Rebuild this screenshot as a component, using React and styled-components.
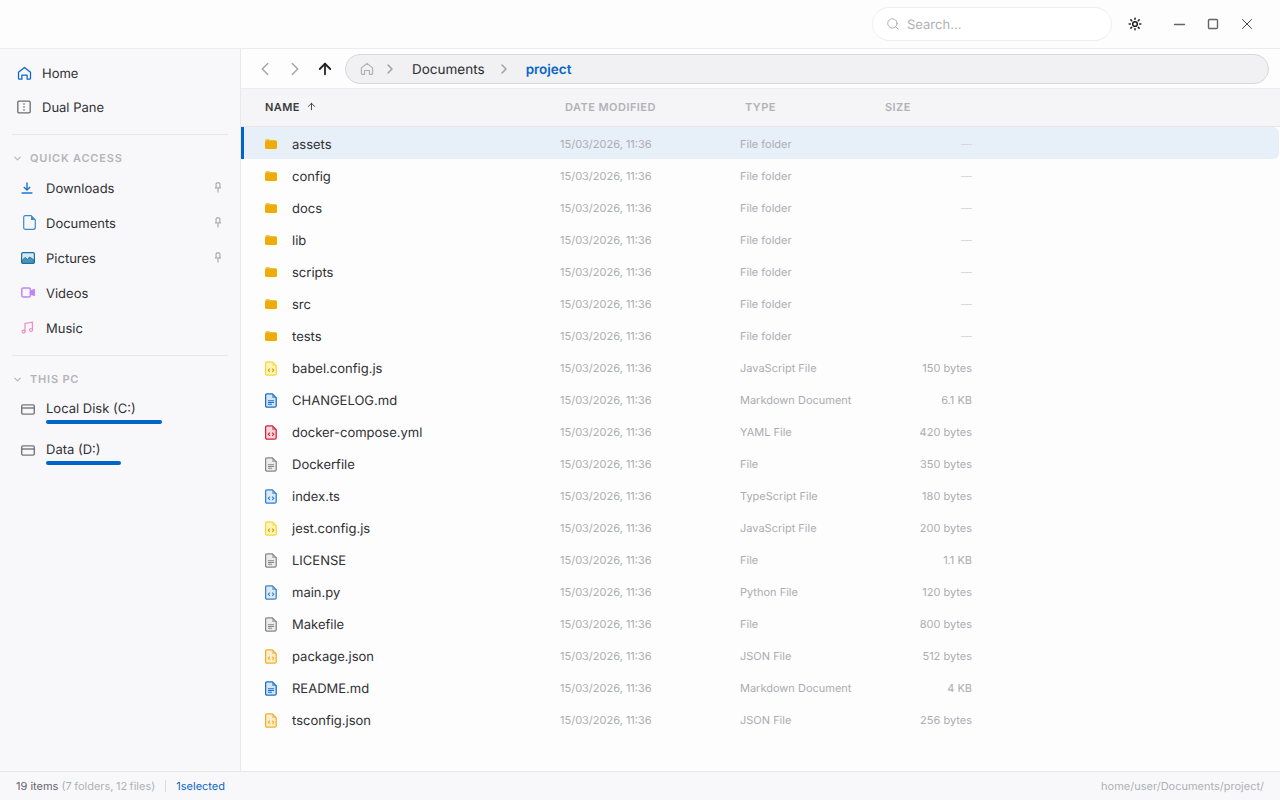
import React from "react";
import styled, { createGlobalStyle } from "styled-components";
import { ChevronDown, ChevronLeft, ChevronRight, ArrowUp, Search, Minus, Square, X, Sun } from "lucide-react";

const GlobalStyle = createGlobalStyle`
  html, body { margin: 0; padding: 0; height: 100%; background: #fdfdfe; }
  * { box-sizing: border-box; }
  body {
    font-family: Inter, "Noto Sans", sans-serif;
    color: #26262a;
    overflow: hidden;
    text-rendering: geometricPrecision;
  }
`;

const FOLDERS = ["assets", "config", "docs", "lib", "scripts", "src", "tests"];

const FILES = [
  ["babel.config.js", "JavaScript File", "150 bytes", "#f8d93a", "#fff4b5", "code"],
  ["CHANGELOG.md", "Markdown Document", "6.1 KB", "#1a6fc4", "#d2e4f6", "text"],
  ["docker-compose.yml", "YAML File", "420 bytes", "#d3213a", "#f8d5da", "code"],
  ["Dockerfile", "File", "350 bytes", "#86868a", "#ececee", "text"],
  ["index.ts", "TypeScript File", "180 bytes", "#2f7fd0", "#dbe9f8", "code"],
  ["jest.config.js", "JavaScript File", "200 bytes", "#f8d93a", "#fff4b5", "code"],
  ["LICENSE", "File", "1.1 KB", "#86868a", "#ececee", "text"],
  ["main.py", "Python File", "120 bytes", "#3a84c0", "#dbe9f5", "code"],
  ["Makefile", "File", "800 bytes", "#86868a", "#ececee", "text"],
  ["package.json", "JSON File", "512 bytes", "#f3ae2c", "#fdeecb", "code"],
  ["README.md", "Markdown Document", "4 KB", "#1a6fc4", "#d2e4f6", "text"],
  ["tsconfig.json", "JSON File", "256 bytes", "#f3ae2c", "#fdeecb", "code"],
];

const FolderIcon = () => (
  <svg width="12" height="10" viewBox="0 0 12 10" style={{ display: "block" }}>
    <path d="M0 1.5A1.5 1.5 0 0 1 1.5 0h2.6l1.4 1.4H0z" fill="#f4c74f" />
    <rect x="0" y="1.2" width="12" height="8.8" rx="1.6" fill="#eead06" />
  </svg>
);

const FileIcon = ({ color, fill, kind }) => (
  <svg width="12" height="15" viewBox="0 0 12 15" fill="none" style={{ display: "block" }}>
    <path d="M2.1.8h5.2l3.9 4v7.9a1.5 1.5 0 0 1-1.5 1.5H2.1a1.5 1.5 0 0 1-1.5-1.5V2.3A1.5 1.5 0 0 1 2.1.8z" fill={fill} stroke={color} strokeWidth="1.3" />
    <path d="M7.1 1v3.9H11z" fill={color} fillOpacity=".55" />
    {kind === "code" ? (
      <path d="M4.8 7.7 3.3 9.3l1.5 1.5M7.2 7.7l1.5 1.6-1.5 1.5" stroke={color === "#f8d93a" ? "#cf9d0a" : color} strokeWidth="1.1" />
    ) : (
      <path d="M3 7.7h6M3 9.5h6M3 11.3h4" stroke={color} strokeWidth="1.1" />
    )}
  </svg>
);

const HomeIcon = ({ color = "#0a66c8", size = 15 }) => (
  <svg width={size} height={size} viewBox="0 0 16 16" fill="none" stroke={color} strokeWidth="1.35" strokeLinejoin="round">
    <path d="M1.6 6.7 8 1.6l6.4 5.1v6.4a1 1 0 0 1-1 1h-2.6V9.7H5.2v4.4H2.6a1 1 0 0 1-1-1z" />
  </svg>
);

const DualPaneIcon = () => (
  <svg width="14" height="14" viewBox="0 0 14 14" fill="none" stroke="#6c6c70" strokeWidth="1.3">
    <rect x=".8" y="1.2" width="12.4" height="11.6" rx="1.2" />
    <path d="M7 3.2v1.6M7 6.2v1.6M7 9.2v1.6" />
  </svg>
);

const DownloadIcon = () => (
  <svg width="12" height="12" viewBox="0 0 12 12" fill="none" stroke="#1a74d0" strokeWidth="1.4">
    <path d="M6 .6v7.2M2.8 4.9 6 8l3.2-3.1M.6 11h10.8" />
  </svg>
);

const DocIcon = () => (
  <svg width="13" height="15" viewBox="0 0 13 15" fill="none" style={{ marginLeft: 2 }}>
    <path d="M2.2.7h5.9l4.2 4.2v7.4a2 2 0 0 1-2 2H2.2a1.5 1.5 0 0 1-1.5-1.5V2.2A1.5 1.5 0 0 1 2.2.7z" stroke="#3d88cc" strokeWidth="1.2" />
    <path d="M8 .8v4.3h4.3z" fill="#3d88cc" />
  </svg>
);

const PicturesIcon = () => (
  <svg width="14" height="12" viewBox="0 0 14 12" fill="none">
    <rect x=".6" y=".6" width="12.8" height="10.8" rx="1.4" fill="#d6e8f2" stroke="#1a6f9c" strokeWidth="1.2" />
    <path d="M1 8.6 4 5.4l2.4 2 2.2-2.4L13 8v2.5a.8.8 0 0 1-.8.8H1.8a.8.8 0 0 1-.8-.8z" fill="#4b93bb" stroke="#1a6f9c" strokeWidth=".9" />
  </svg>
);

const VideoIcon = () => (
  <svg width="14" height="11" viewBox="0 0 14 11" fill="none" stroke="#c084fc" strokeWidth="1.5" strokeLinejoin="round">
    <rect x=".8" y="1" width="8.6" height="9" rx="1.6" />
    <path d="M9.6 4.2 13.2 2.6v5.8L9.6 6.8z" fill="#c084fc" />
  </svg>
);

const MusicIcon = () => (
  <svg width="13" height="13" viewBox="0 0 13 13" fill="none" stroke="#f08cc0" strokeWidth="1.2">
    <path d="M4 10.4V2.4l7.4-1.2v7.6" />
    <circle cx="2.6" cy="10.6" r="1.5" />
    <circle cx="10" cy="9" r="1.5" />
  </svg>
);

const DiskIcon = () => (
  <svg width="14" height="11" viewBox="0 0 14 11" fill="none" stroke="#77777b" strokeWidth="1.4">
    <rect x=".7" y=".9" width="12.6" height="9.2" rx="1.4" />
    <path d="M.9 4h12.2" />
  </svg>
);

const PinIcon = () => (
  <svg width="6" height="11" viewBox="0 0 6 11" fill="none" stroke="#aeaeb2" strokeWidth="1.2">
    <path d="M3 .6c1.3 0 2 1 2 2.2 0 .7-.3 1-.2 1.7l.7 1.3H.5l.7-1.3c.1-.7-.2-1-.2-1.7C1 1.6 1.7.6 3 .6z" />
    <path d="M3 6v4.4" />
  </svg>
);

const Shell = styled.div`
  width: 1280px;
  height: 800px;
  display: flex;
  flex-direction: column;
  background: #f8f8fb;
`;

// nudges text one pixel down inside a centred row
const Label = styled.span`
  padding-top: 2px;
`;

const TitleBar = styled.header`
  height: 49px;
  flex: none;
  display: flex;
  align-items: center;
  justify-content: flex-end;
  background: #fdfdfe;
  border-bottom: 1px solid #ececef;
`;

const SearchBox = styled.div`
  width: 240px;
  height: 34px;
  margin-right: 6px;
  padding-left: 13px;
  display: flex;
  align-items: center;
  gap: 7px;
  background: #fff;
  border: 1px solid #efeff1;
  border-radius: 17px;
  font-size: 13px;
  color: #b0b0b3;
`;

const TitleButton = styled.button`
  width: 34px;
  height: 34px;
  padding: 0;
  display: flex;
  align-items: center;
  justify-content: center;
  background: none;
  border: 0;
  color: ${(p) => p.$color || "#66666a"};
`;

const ThemeButton = styled(TitleButton)`
  margin-right: 10px;
`;

const WindowButtons = styled.div`
  display: flex;
  margin-right: 16px;
`;

const Body = styled.div`
  flex: 1;
  min-height: 0;
  display: flex;
`;

const Sidebar = styled.aside`
  width: 241px;
  flex: none;
  padding: 7px 12px 0;
  border-right: 1px solid #e9e9ec;
  background: #f8f8fb;
`;

const TopItem = styled.div`
  height: 34px;
  padding-left: 4px;
  display: flex;
  align-items: center;
  gap: 10px;
  font-size: 13px;
  color: #303034;
`;

const TopIconSlot = styled.span`
  width: 16px;
  display: flex;
  justify-content: center;
`;

const Divider = styled.div`
  height: 1px;
  margin: 10px 0 15px;
  background: #e8e8eb;
`;

const SectionHead = styled.div`
  height: 16px;
  display: flex;
  align-items: center;
  gap: 7px;
  font-size: 11px;
  font-weight: 600;
  letter-spacing: 0.8px;
  color: #b4b4b8;
`;

const SideList = styled.div`
  margin-top: 4px;
`;

const DiskList = styled.div`
  margin-top: 11px;
`;

const SideItem = styled.div`
  height: 35px;
  padding: 0 7px 0 9px;
  display: flex;
  align-items: center;
  font-size: 13px;
  color: #303034;
`;

const SideIconSlot = styled.span`
  width: 25px;
  flex: none;
  display: flex;
  align-items: center;
`;

const SideLabel = styled(Label)`
  flex: 1;
`;

const DiskRow = styled.div`
  height: 41px;
  padding-left: 9px;
  display: flex;
  align-items: flex-start;
`;

const DiskIconSlot = styled(SideIconSlot)`
  height: 22px;
`;

const DiskInfo = styled.div`
  display: flex;
  flex-direction: column;
  font-size: 13px;
  line-height: 22px;
  color: #303034;
`;

const DiskBar = styled.div`
  height: 4px;
  border-radius: 2px;
  background: #0064c8;
`;

const Main = styled.main`
  flex: 1;
  min-width: 0;
  display: flex;
  flex-direction: column;
  background: #fdfdfe;
`;

const NavBar = styled.div`
  height: 40px;
  flex: none;
  padding: 0 11px 0 9px;
  display: flex;
  align-items: center;
  border-bottom: 1px solid #ececef;
`;

const NavButton = styled.button`
  width: 30px;
  height: 30px;
  padding: 0;
  display: flex;
  align-items: center;
  justify-content: center;
  background: none;
  border: 0;
  color: ${(p) => p.$color};
`;

const Crumbs = styled.div`
  flex: 1;
  height: 30px;
  margin-left: 5px;
  padding-left: 14px;
  display: flex;
  align-items: center;
  background: #f1f1f3;
  border: 1px solid #d8d8db;
  border-radius: 15px;
  font-size: 13.5px;
`;

const Crumb = styled(Label)`
  color: ${(p) => (p.$active ? "#0a66c8" : "#2c2c30")};
  font-weight: ${(p) => (p.$active ? 600 : 400)};
`;

const CrumbSep = styled.span`
  display: flex;
  width: ${(p) => p.$width}px;
  margin-right: ${(p) => p.$gap}px;
  justify-content: center;
  color: #a0a0a4;
`;

const TableHead = styled.div`
  height: 38px;
  flex: none;
  padding: 0 0 2px 24px;
  display: grid;
  grid-template-columns: 300px 180px 140px 1fr;
  align-items: center;
  background: #f5f5f7;
  border-bottom: 1px solid #e6e6e9;
  font-size: 11px;
  font-weight: 600;
  letter-spacing: 0.45px;
  color: #b2b2b6;
`;

const NameHead = styled.span`
  display: flex;
  align-items: center;
  gap: 6px;
  color: #3a3a3e;
`;

const Rows = styled.div`
  flex: 1;
`;

const Row = styled.div`
  height: 32px;
  padding: 2px 0 0 21px;
  display: grid;
  grid-template-columns: 295px 180px 140px 92px;
  align-items: center;
  background: ${(p) => (p.$selected ? "#e7eff9" : "transparent")};
  border-left: 3px solid ${(p) => (p.$selected ? "#0064c8" : "transparent")};
  border-radius: ${(p) => (p.$selected ? "0 6px 6px 0" : "0")};
  margin-right: 1px;
`;

const NameCell = styled.span`
  display: flex;
  align-items: center;
  font-size: 13px;
  color: #303034;
`;

const RowIcon = styled.span`
  width: 27px;
  flex: none;
  display: flex;
  align-items: center;
`;

const MetaCell = styled.span`
  font-size: 11px;
  color: #acacb0;
`;

const SizeCell = styled(MetaCell)`
  text-align: right;
  color: ${(p) => (p.$empty ? "#d4d4d8" : "#acacb0")};
`;

const StatusBar = styled.footer`
  height: 29px;
  flex: none;
  padding: 0 16px;
  display: flex;
  align-items: center;
  background: #f8f8fb;
  border-top: 1px solid #e9e9ec;
  font-size: 11px;
  color: #66666a;
`;

const Muted = styled.span`
  margin-left: 3px;
  color: #b0b0b4;
  word-spacing: -0.6px;
`;

const StatusSep = styled.span`
  width: 1px;
  height: 12px;
  margin: 0 10px;
  background: #dcdcdf;
`;

const Selected = styled.span`
  color: #0a66c8;
  word-spacing: -3px;
`;

const PathText = styled.span`
  margin-left: auto;
  color: #b0b0b4;
`;

export default function App() {
  return (
    <Shell>
      <GlobalStyle />
      <TitleBar>
        <SearchBox>
          <Search size={14} color="#a8a8ac" strokeWidth={1.6} />
          <Label>Search...</Label>
        </SearchBox>
        <ThemeButton $color="#222">
          <Sun size={14} strokeWidth={2.6} />
        </ThemeButton>
        <WindowButtons>
          <TitleButton><Minus size={17} strokeWidth={2} /></TitleButton>
          <TitleButton><Square size={12} strokeWidth={2.8} /></TitleButton>
          <TitleButton $color="#444"><X size={18} strokeWidth={1.3} /></TitleButton>
        </WindowButtons>
      </TitleBar>
      <Body>
        <Sidebar>
          <TopItem>
            <TopIconSlot><HomeIcon /></TopIconSlot>
            <Label>Home</Label>
          </TopItem>
          <TopItem>
            <TopIconSlot><DualPaneIcon /></TopIconSlot>
            <Label>Dual Pane</Label>
          </TopItem>
          <Divider />
          <SectionHead>
            <ChevronDown size={11} strokeWidth={2.4} />
            QUICK ACCESS
          </SectionHead>
          <SideList>
            <SideItem>
              <SideIconSlot><DownloadIcon /></SideIconSlot>
              <SideLabel>Downloads</SideLabel>
              <PinIcon />
            </SideItem>
            <SideItem>
              <SideIconSlot><DocIcon /></SideIconSlot>
              <SideLabel>Documents</SideLabel>
              <PinIcon />
            </SideItem>
            <SideItem>
              <SideIconSlot><PicturesIcon /></SideIconSlot>
              <SideLabel>Pictures</SideLabel>
              <PinIcon />
            </SideItem>
            <SideItem>
              <SideIconSlot><VideoIcon /></SideIconSlot>
              <SideLabel>Videos</SideLabel>
            </SideItem>
            <SideItem>
              <SideIconSlot><MusicIcon /></SideIconSlot>
              <SideLabel>Music</SideLabel>
            </SideItem>
          </SideList>
          <Divider />
          <SectionHead>
            <ChevronDown size={11} strokeWidth={2.4} />
            THIS PC
          </SectionHead>
          <DiskList>
            <DiskRow>
              <DiskIconSlot><DiskIcon /></DiskIconSlot>
              <DiskInfo>
                Local Disk (C:)
                <DiskBar style={{ width: 116 }} />
              </DiskInfo>
            </DiskRow>
            <DiskRow>
              <DiskIconSlot><DiskIcon /></DiskIconSlot>
              <DiskInfo>
                Data (D:)
                <DiskBar style={{ width: 75 }} />
              </DiskInfo>
            </DiskRow>
          </DiskList>
        </Sidebar>
        <Main>
          <NavBar>
            <NavButton $color="#a2a2a6"><ChevronLeft size={22} strokeWidth={1.5} /></NavButton>
            <NavButton $color="#a2a2a6"><ChevronRight size={22} strokeWidth={1.5} /></NavButton>
            <NavButton $color="#222"><ArrowUp size={18} strokeWidth={2.4} /></NavButton>
            <Crumbs>
              <HomeIcon color="#b0b0b4" size={14} />
              <CrumbSep $width={32} $gap={6}><ChevronRight size={16} strokeWidth={2.2} /></CrumbSep>
              <Crumb>Documents</Crumb>
              <CrumbSep $width={38} $gap={3}><ChevronRight size={16} strokeWidth={2.2} /></CrumbSep>
              <Crumb $active>project</Crumb>
            </Crumbs>
          </NavBar>
          <TableHead>
            <NameHead>NAME <ArrowUp size={11} strokeWidth={2} /></NameHead>
            <span>DATE MODIFIED</span>
            <span>TYPE</span>
            <span>SIZE</span>
          </TableHead>
          <Rows>
            {FOLDERS.map((name, i) => (
              <Row key={name} $selected={i === 0}>
                <NameCell><RowIcon><FolderIcon /></RowIcon><Label>{name}</Label></NameCell>
                <MetaCell>15/03/2026, 11:36</MetaCell>
                <MetaCell>File folder</MetaCell>
                <SizeCell $empty>—</SizeCell>
              </Row>
            ))}
            {FILES.map(([name, type, size, color, fill, kind]) => (
              <Row key={name}>
                <NameCell><RowIcon><FileIcon color={color} fill={fill} kind={kind} /></RowIcon><Label>{name}</Label></NameCell>
                <MetaCell>15/03/2026, 11:36</MetaCell>
                <MetaCell>{type}</MetaCell>
                <SizeCell>{size}</SizeCell>
              </Row>
            ))}
          </Rows>
        </Main>
      </Body>
      <StatusBar>
        19 items
        <Muted>(7 folders, 12 files)</Muted>
        <StatusSep />
        <Selected>1 selected</Selected>
        <PathText>home/user/Documents/project/</PathText>
      </StatusBar>
    </Shell>
  );
}
